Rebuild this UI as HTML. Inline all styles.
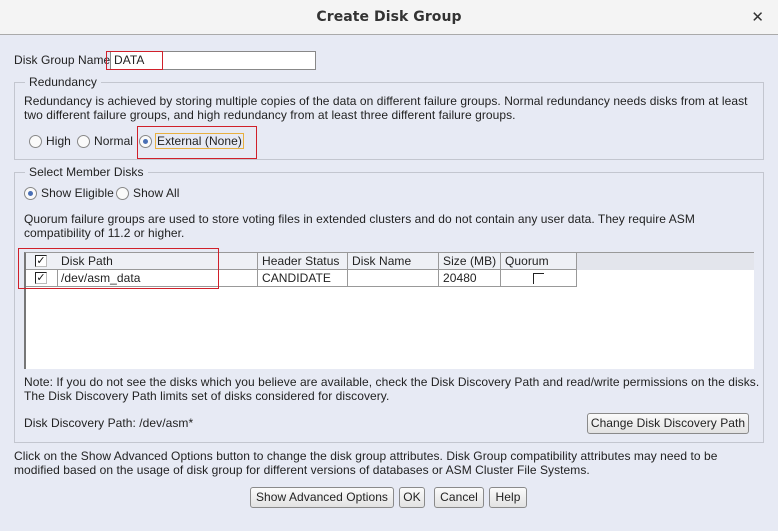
<!DOCTYPE html>
<html><head><meta charset="utf-8"><style>
*{margin:0;padding:0;box-sizing:border-box}
body{width:778px;height:531px;overflow:hidden;background:#e7eaf4;font-family:"Liberation Sans","DejaVu Sans",sans-serif;font-size:12px;color:#222;position:relative;letter-spacing:0.06px}
.a{position:absolute;white-space:nowrap;line-height:14px}
.title{position:absolute;left:0;top:0;width:778px;height:35px;background:#f4f4f4;border-bottom:1px solid #aaa;text-align:center;font:bold 14px/35px "DejaVu Sans","Liberation Sans",sans-serif;color:#333}
.x{position:absolute;right:14px;top:0;font:bold 15px/35px "DejaVu Sans",sans-serif;color:#333}
.box{position:absolute;border:1px solid #c3c6cf}
.leg{position:absolute;background:#e7eaf4;padding:0 4px;white-space:nowrap;line-height:14px}
.rad{position:absolute;width:13px;height:13px;border:1px solid #888;border-radius:50%;background:#fafafa}
.rad.on::after{content:"";position:absolute;left:3px;top:3px;width:5px;height:5px;border-radius:50%;background:#4a6fb5}
.red{position:absolute;border:1px solid #d0202a}
.btn{position:absolute;height:21px;border:1px solid #8a8a8a;border-radius:3px;background:linear-gradient(#fbfbfb,#e2e2e2);text-align:center;line-height:19px;white-space:nowrap}
.cb{position:absolute;width:12px;height:12px;border:1px solid #222;border-right-color:#bbb;border-bottom-color:#bbb;background:#fff;font:bold 11px/10px "DejaVu Sans",sans-serif;text-align:center;color:#111}
.th{position:absolute;top:252px;height:18px;border:1px solid #999;border-left:none;background:#eef0f5;line-height:16px;padding-left:4px}
.td{position:absolute;top:270px;height:17px;border-right:1px solid #999;border-bottom:1px solid #999;line-height:16px;padding-left:4px}
</style></head><body>
<div class="title">Create Disk Group<span class="x">✕</span></div>

<div class="a" style="left:14px;top:53px">Disk Group Name</div>
<div style="position:absolute;left:110px;top:51px;width:206px;height:19px;background:#fff;border:1px solid #888"></div>
<div class="a" style="left:114px;top:53px">DATA</div>
<div class="red" style="left:106px;top:51px;width:57px;height:19px"></div>

<div class="box" style="left:14px;top:82px;width:750px;height:78px"></div>
<div class="leg" style="left:25px;top:75px">Redundancy</div>
<div class="a" style="left:24px;top:94px">Redundancy is achieved by storing multiple copies of the data on different failure groups. Normal redundancy needs disks from at least</div>
<div class="a" style="left:24px;top:108px">two different failure groups, and high redundancy from at least three different failure groups.</div>
<div class="rad" style="left:29px;top:135px"></div><div class="a" style="left:46px;top:134px">High</div>
<div class="rad" style="left:77px;top:135px"></div><div class="a" style="left:94px;top:134px">Normal</div>
<div class="rad on" style="left:139px;top:135px"></div>
<div class="a" style="left:155px;top:133px;border:1px solid #e8b040;padding:0 1px">External (None)</div>
<div class="red" style="left:137px;top:126px;width:120px;height:33px"></div>

<div class="box" style="left:14px;top:172px;width:750px;height:271px"></div>
<div class="leg" style="left:25px;top:165px">Select Member Disks</div>
<div class="rad on" style="left:24px;top:187px"></div><div class="a" style="left:41px;top:186px">Show Eligible</div>
<div class="rad" style="left:116px;top:187px"></div><div class="a" style="left:133px;top:186px">Show All</div>
<div class="a" style="left:24px;top:212px">Quorum failure groups are used to store voting files in extended clusters and do not contain any user data. They require ASM</div>
<div class="a" style="left:24px;top:226px">compatibility of 11.2 or higher.</div>

<div style="position:absolute;left:24px;top:252px;width:730px;height:117px;background:#fff;border-left:2px solid #777;border-top:1px solid #999"></div>
<div style="position:absolute;left:26px;top:253px;width:728px;height:17px;background:#e3e5ec"></div>
<div class="th" style="left:26px;width:32px"></div>
<div class="cb" style="left:35px;top:255px">✓</div>
<div class="th" style="left:57px;width:201px">Disk Path</div>
<div class="th" style="left:258px;width:90px">Header Status</div>
<div class="th" style="left:348px;width:91px">Disk Name</div>
<div class="th" style="left:439px;width:62px">Size (MB)</div>
<div class="th" style="left:501px;width:76px">Quorum</div>
<div class="td" style="left:26px;width:32px"></div>
<div class="cb" style="left:35px;top:272px">✓</div>
<div class="td" style="left:57px;width:201px">/dev/asm_data</div>
<div class="td" style="left:258px;width:90px">CANDIDATE</div>
<div class="td" style="left:348px;width:91px"></div>
<div class="td" style="left:439px;width:62px">20480</div>
<div class="td" style="left:501px;width:76px"></div>
<div style="position:absolute;left:533px;top:273px;width:11px;height:11px;border-left:1px solid #222;border-top:1px solid #222;background:#fff"></div>
<div class="red" style="left:18px;top:248px;width:201px;height:41px"></div>

<div class="a" style="left:24px;top:375px">Note: If you do not see the disks which you believe are available, check the Disk Discovery Path and read/write permissions on the disks.</div>
<div class="a" style="left:24px;top:389px">The Disk Discovery Path limits set of disks considered for discovery.</div>
<div class="a" style="left:24px;top:416px">Disk Discovery Path: /dev/asm*</div>
<div class="btn" style="left:587px;top:413px;width:162px">Change Disk Discovery Path</div>

<div class="a" style="left:14px;top:449px">Click on the Show Advanced Options button to change the disk group attributes. Disk Group compatibility attributes may need to be</div>
<div class="a" style="left:14px;top:463px">modified based on the usage of disk group for different versions of databases or ASM Cluster File Systems.</div>

<div class="btn" style="left:250px;top:487px;width:144px">Show Advanced Options</div>
<div class="btn" style="left:399px;top:487px;width:26px">OK</div>
<div class="btn" style="left:434px;top:487px;width:50px">Cancel</div>
<div class="btn" style="left:489px;top:487px;width:38px">Help</div>
</body></html>
